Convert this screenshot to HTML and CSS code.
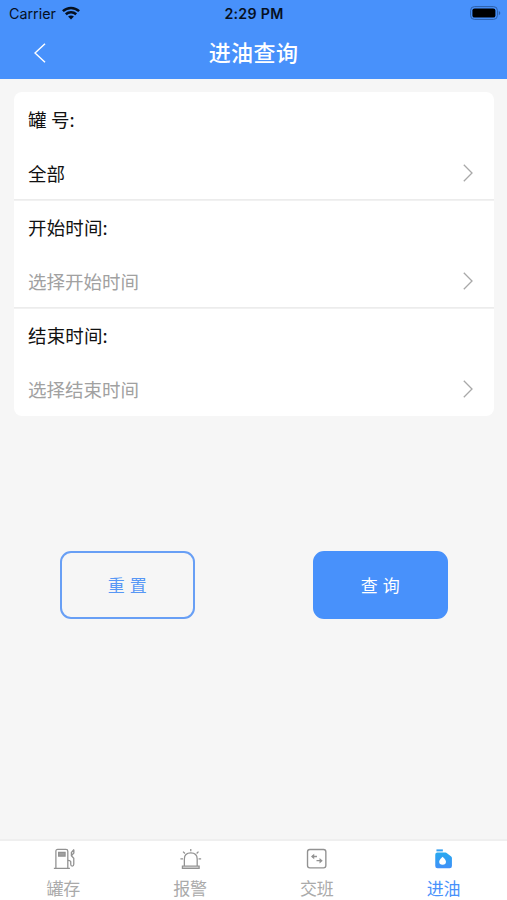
FILE: index.html
```html
<!DOCTYPE html>
<html lang="zh-CN">
<head>
<meta charset="utf-8">
<title>进油查询</title>
<link rel="stylesheet" href="styles.css">
</head>
<body>
<div class="app">
  <header class="header">
    <div class="status">
      <div class="carrier"><span>Carrier</span>
        <svg width="18" height="14" viewBox="0 0 18 14" fill="none" stroke="#06101f" stroke-width="2.5"><path d="M.9 5.2C5.6.8 12.4.8 17.1 5.2M3.8 8.2c3-2.7 7.4-2.7 10.4 0"/><path d="M9 13.4 6.1 10.5c1.6-1.5 4.2-1.5 5.8 0z" fill="#06101f" stroke="none"/></svg>
      </div>
      <span class="clock">2:29 PM</span>
      <svg class="battery" width="31" height="14" viewBox="0 0 31 14"><rect x=".6" y=".6" width="26.8" height="12.8" rx="3.8" fill="none" stroke="#2d5fa8"/><rect x="2.4" y="2.4" width="23" height="9.2" rx="2.2"/><path d="M28.8 4.7q3 2.3 0 4.6z" fill="#2d5fa8"/></svg>
    </div>
    <nav class="titlebar">
      <svg class="back" width="12" height="20" viewBox="0 0 12 20" fill="none" stroke="#fff" stroke-width="1.5"><path d="M11 .8 1 10l10 9.2"/></svg>
      <h1>进油查询</h1>
    </nav>
  </header>
  <main class="content">
    <section class="form">
      <div class="field">
        <div class="label">罐 号:</div>
        <div class="value"><span>全部</span><svg class="chevron" viewBox="0 0 10 18"><path d="m.8.8 8.2 8.2-8.2 8.2"/></svg></div>
      </div>
      <div class="field">
        <div class="label">开始时间:</div>
        <div class="value placeholder"><span>选择开始时间</span><svg class="chevron" viewBox="0 0 10 18"><path d="m.8.8 8.2 8.2-8.2 8.2"/></svg></div>
      </div>
      <div class="field">
        <div class="label">结束时间:</div>
        <div class="value placeholder"><span>选择结束时间</span><svg class="chevron" viewBox="0 0 10 18"><path d="m.8.8 8.2 8.2-8.2 8.2"/></svg></div>
      </div>
    </section>
    <div class="actions">
      <button class="btn">重 置</button>
      <button class="btn primary">查 询</button>
    </div>
  </main>
  <footer class="tabs">
    <a class="tab">
      <svg viewBox="0 0 24 24" fill="none" stroke="#929292" stroke-width="1.4"><path d="M3.700 22V3.500q0-2 2-2h9q2 0 2 2V22M1.500 22.200h17.500"/><path d="M6.700 4.800h7v4h-7z" fill="#a0a0a0"/><path d="M23.500 1.500 20.600 5v3.400l2.600 2.800v6.500q0 2-1.700 2-1.600 0-1.600-2v-2.600q0-1.300-3.200-1.600M20.600 8.400 23.300 5.500V2"/></svg>
      <span>罐存</span>
    </a>
    <a class="tab">
      <svg viewBox="0 0 24 24" fill="none" stroke="#929292" stroke-width="1.4"><path d="M5.300 19.500V12q0-6.700 7-6.700t7 6.700v7.500M3.200 19.800h18.200v2.300H3.200zM12.300 1v2.500M3.900 4l2 2M20.700 4l-2 2M1 11.800h2.800M20.800 11.800h2.800"/></svg>
      <span>报警</span>
    </a>
    <a class="tab">
      <svg viewBox="0 0 24 24" fill="none" stroke="#929292" stroke-width="1.5"><rect x="2.200" y="1.700" width="20" height="20" rx="2.500"/><path d="M12.500 9.300H7M12 13.800h5"/><path d="m6 9.300 3.500-3v6zM18.800 13.800l-3.500-3v6z" fill="#929292" stroke="none"/></svg>
      <span>交班</span>
    </a>
    <a class="tab active">
      <svg viewBox="0 0 24 24"><defs><linearGradient id="can" x2="0" y2="1"><stop stop-color="#27a9ef"/><stop offset="1" stop-color="#4190f8"/></linearGradient></defs><path d="M4.300 1.500h7v2.200h-7z" fill="#36a0f3"/><path d="M5.300 5h8.800q1 0 1.700.6l4.600 3.600q.8.700.8 1.700v8.800q0 2.500-2.500 2.500H5.500Q3 22.200 3 19.700V7.300Q3 5 5.300 5z" fill="url(#can)"/><path d="M11 9.500q3.700 3.400 3.700 5.500a3.700 3.300 0 0 1-7.400 0q0-2.100 3.700-5.500z" fill="#fff"/></svg>
      <span>进油</span>
    </a>
  </footer>
</div>
</body>
</html>
```
FILE: styles.css
```css
* { box-sizing: border-box; }
body { margin: 0; background: #f6f6f6; font-family: "Noto Sans CJK SC", sans-serif; }
.app { width: 507px; height: 900px; display: flex; flex-direction: column; background: #f6f6f6; }
.header { height: 79px; background: #4891fb; }
.status { height: 27px; padding: 0 6px 0 9px; display: grid; grid-template-columns: 1fr auto 1fr; align-items: center; font-family: Inter, sans-serif; font-size: 14px; color: #06101f; }
.carrier { display: flex; align-items: center; gap: 6px; font-size: 14.3px; }
.carrier svg { margin-top: -2px; }
.clock { margin-left: -2px; font-weight: 600; font-size: 14.2px; letter-spacing: .3px; }
.battery { justify-self: end; margin-top: -1px; }
.titlebar { height: 52px; display: grid; grid-template-columns: 1fr auto 1fr; align-items: center; }
.back { margin-left: 34px; margin-top: -1px; }
h1 { margin: -4px 0 0; font-size: 22px; line-height: 32px; font-weight: 500; letter-spacing: .4px; color: #fff; }
.content { flex: 1; padding: 13px 13px 0 14px; }
.form { height: 324px; display: flex; flex-direction: column; background: #fff; border-radius: 8px; overflow: hidden; }
.field { height: 108px; padding: 0 21px 0 14px; font-size: 18.5px; color: #111; }
.field + .field { box-shadow: inset 0 1px #f1f1f1, 0 -1px #ececec; }
.label, .value { height: 54px; display: flex; align-items: center; }
.label { letter-spacing: .15px; }
.value { justify-content: space-between; }
.placeholder { color: #a1a1a1; }
.chevron { width: 10px; height: 18px; fill: none; stroke: #a8a8a8; stroke-width: 1.3; }
.actions { margin-top: 135px; padding: 0 46px; display: flex; justify-content: space-between; }
.btn { width: 135px; height: 68px; padding: 0 0 2px; border: 2px solid #689ff5; border-radius: 11px; background: transparent; color: #5797f5; font: 400 17px "Noto Sans CJK SC", sans-serif; letter-spacing: .5px; }
.primary { background: #4891fb; border-color: #4891fb; color: #fff; }
.tabs { height: 61px; display: flex; background: #fff; border-top: 2px solid #efefef; }
.tab { flex: 1; display: flex; flex-direction: column; align-items: center; padding-top: 7px; font-size: 17px; line-height: 24px; color: #aaa; }
.tab svg { width: 25px; height: 25px; margin-bottom: 6px; }
.active { color: #4891fb; }
```
